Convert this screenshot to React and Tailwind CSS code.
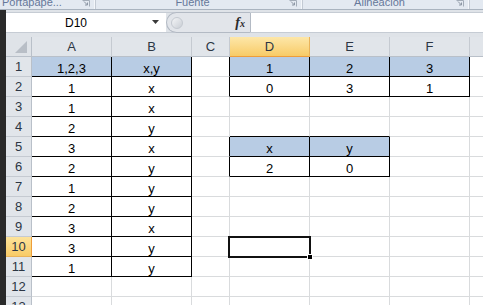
import React from 'react';

const COLS = [
    { key: 'A', w: 'w-[80px]' },
    { key: 'B', w: 'w-[80px]' },
    { key: 'C', w: 'w-[38px]' },
    { key: 'D', w: 'w-[80px]' },
    { key: 'E', w: 'w-[80px]' },
    { key: 'F', w: 'w-[80px]' },
    { key: 'G', w: 'w-[80px]' },
];

const ROWS = [1, 2, 3, 4, 5, 6, 7, 8, 9, 10, 11, 12, 13];

const VALUES = {
    A1: '1,2,3', B1: 'x,y',
    A2: '1', B2: 'x',
    A3: '1', B3: 'x',
    A4: '2', B4: 'y',
    A5: '3', B5: 'x',
    A6: '2', B6: 'y',
    A7: '1', B7: 'y',
    A8: '2', B8: 'y',
    A9: '3', B9: 'x',
    A10: '3', B10: 'y',
    A11: '1', B11: 'y',
    D1: '1', E1: '2', F1: '3',
    D2: '0', E2: '3', F2: '1',
    D5: 'x', E5: 'y',
    D6: '2', E6: '0',
};

const FILLED = ['A1', 'B1', 'D1', 'E1', 'F1', 'D5', 'E5'];

// rectangular ranges with all borders
const TABLES = [
    { c0: 0, c1: 1, r0: 1, r1: 11 },
    { c0: 3, c1: 5, r0: 1, r1: 2 },
    { c0: 3, c1: 4, r0: 5, r1: 6 },
];

const inTable = (ci, r) => TABLES.some(t => ci >= t.c0 && ci <= t.c1 && r >= t.r0 && r <= t.r1);

function Launcher() {
    return (
        <svg width="8" height="7" viewBox="0 0 8 7">
            <path d="M0.5 0.5 H7.5 V6.5" fill="none" stroke="#a3acb8" />
            <path d="M2 1.5 L5.5 5 M3 5 H5.5 V2.5" fill="none" stroke="#8c96a4" />
        </svg>
    );
}

function Ribbon() {
    const groups = [
        { label: 'Portapape...', w: 'w-[96px]', align: 'justify-start pl-[2px]' },
        { label: 'Fuente', w: 'w-[207px]', align: 'justify-center' },
        { label: 'Alineación', w: 'w-[167px]', align: 'justify-center' },
    ];
    return (
        <div className="h-[10px] flex bg-[#e3e9f1] border-b border-[#a9b3bf] overflow-hidden text-[11px] text-[#66789a]">
            {groups.map(g => (
                <div key={g.label} className={`${g.w} shrink-0 flex border-r border-[#c3cad4] shadow-[inset_-1px_0_0_#f4f7fb]`}>
                    <div className={`flex-1 flex ${g.align}`}>
                        <span className="-mt-[4px] leading-[12px] whitespace-nowrap">{g.label}</span>
                    </div>
                    <div className="w-[8px] mr-[5px]">
                        <Launcher />
                    </div>
                </div>
            ))}
            <div className="flex-1" />
        </div>
    );
}

function FormulaBar() {
    return (
        <div className="bg-[#dfe3e8] pt-[2px] pb-[4px]">
            <div className="h-[21px] flex border-y border-[#c6ccd4]">
                <div className="w-[160px] shrink-0 bg-white flex items-center">
                    <div className="w-[140px] text-center text-[12px] text-black leading-none">D10</div>
                    <svg width="8" height="5" viewBox="0 0 8 5" className="ml-[6px]">
                        <path d="M0 0 H7 L3.5 4 Z" fill="#3a3a3a" />
                    </svg>
                </div>
                <div className="w-[84px] shrink-0 relative bg-[#e2e5ea] rounded-l-[11px] border border-r-0 border-[#b3bac4] -my-[1px] flex items-center">
                    <div className="ml-[4px] w-[12px] h-[12px] rounded-full bg-gradient-to-br from-[#f4f5f7] to-[#c9ced5] border border-[#c4c9d0]" />
                    <div className="flex-1" />
                    <span className="mr-[5px] font-['Liberation_Serif',serif] italic font-bold text-[14px] leading-none text-[#2a2a2a]">
                        f<span className="text-[10px]">x</span>
                    </span>
                </div>
                <div className="flex-1 bg-white border-l border-[#b3bac4]" />
            </div>
        </div>
    );
}

function HeaderRow() {
    return (
        <div className="flex h-[20px]">
            <div className="w-[26px] shrink-0 bg-[#dfe3e8] border-r border-b border-[#b9c0c9] relative">
                <svg width="12" height="12" viewBox="0 0 12 12" className="absolute right-[4px] bottom-[3px]">
                    <path d="M12 0 V12 H0 Z" fill="#b8bec6" />
                </svg>
            </div>
            {COLS.map(c => (
                <div
                    key={c.key}
                    className={`${c.w} shrink-0 flex items-center justify-center text-[13px] text-[#2c3644] border-r border-b ${
                        c.key === 'D'
                            ? 'bg-gradient-to-b from-[#fde7a8] to-[#f8cb66] border-r-[#e9b35a] border-b-[#ee9d3a]'
                            : 'bg-[#e1e5ea] border-r-[#c5cad1] border-b-[#b9c0c9]'
                    }`}
                >
                    {c.key}
                </div>
            ))}
        </div>
    );
}

function Row({ r }) {
    const sel = r === 10;
    return (
        <div className="flex h-[20px]">
            <div
                className={`w-[26px] shrink-0 flex items-center justify-center text-[13px] text-[#2c3644] border-r border-b ${
                    sel
                        ? 'bg-gradient-to-b from-[#fde39a] to-[#f8cb66] border-r-[#ee9d3a] border-b-[#e9b35a]'
                        : 'bg-[#e1e5ea] border-r-[#b9c0c9] border-b-[#c5cad1]'
                }`}
            >
                {r}
            </div>
            {COLS.map((c, ci) => {
                const id = `${c.key}${r}`;
                const me = inTable(ci, r);
                const rightBlack = me || inTable(ci + 1, r);
                const bottomBlack = me || inTable(ci, r + 1);
                const fill = FILLED.includes(id);
                return (
                    <div
                        key={id}
                        className={`${c.w} shrink-0 relative flex items-end justify-center text-[13px] leading-[15px] text-black border-r border-b ${
                            rightBlack ? 'border-r-black' : 'border-r-[#d9dbdd]'
                        } ${bottomBlack ? 'border-b-black' : 'border-b-[#d9dbdd]'} ${fill ? 'bg-[#b8cce4]' : 'bg-white'}`}
                    >
                        {VALUES[id] || ''}
                        {id === 'D10' && (
                            <div className="absolute z-10 -left-[2px] -top-[1px] w-[83px] h-[22px] border-[2px] border-[#111]">
                                <div className="absolute -right-[4px] -bottom-[4px] w-[6px] h-[6px] bg-black border border-white" />
                            </div>
                        )}
                    </div>
                );
            })}
        </div>
    );
}

export default function App() {
    return (
        <div className="w-[483px] h-[305px] overflow-hidden bg-white font-['Liberation_Sans',Arial,sans-serif]">
            <Ribbon />
            <div className="flex">
                <div className="w-[6px] shrink-0 bg-[#2a2a2a]" />
                <div className="flex-1 min-w-0 overflow-hidden">
                    <FormulaBar />
                    <HeaderRow />
                    {ROWS.map(r => (
                        <Row key={r} r={r} />
                    ))}
                </div>
            </div>
        </div>
    );
}
